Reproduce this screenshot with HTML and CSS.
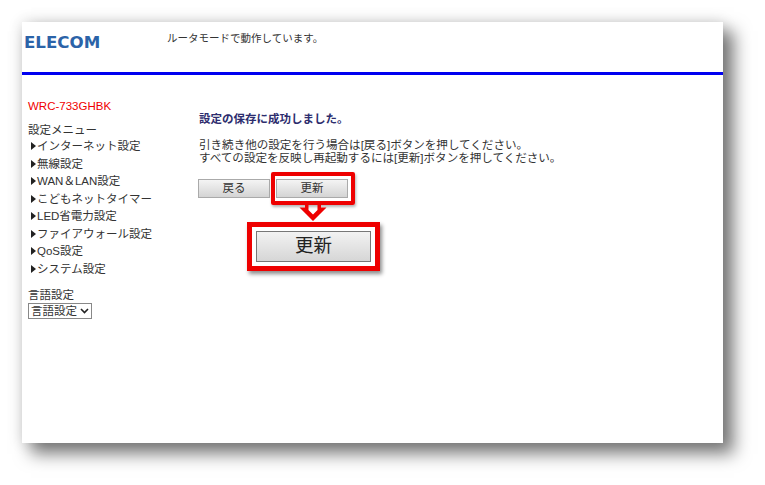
FILE: index.html
```html
<!DOCTYPE html>
<html lang="ja">
<head>
    <meta charset="UTF-8">
    <meta name="viewport" content="width=device-width, initial-scale=1.0">
    <title>WRC-733GHBK</title>
    <link rel="stylesheet" href="styles.css">
</head>
<body>
    <div class="panel">
        <div class="header">
            <div class="logo-box"><div class="logo">ELECOM</div></div>
            <div class="mode">ルータモードで動作しています。</div>
        </div>
        <div class="main">
            <div class="sidebar">
                <div class="model">WRC-733GHBK</div>
                <div class="menu-title">設定メニュー</div>
                <ul class="menu">
                    <li>インターネット設定</li>
                    <li>無線設定</li>
                    <li>WAN＆LAN設定</li>
                    <li>こどもネットタイマー</li>
                    <li>LED省電力設定</li>
                    <li>ファイアウォール設定</li>
                    <li>QoS設定</li>
                    <li>システム設定</li>
                </ul>
                <div class="lang-title">言語設定</div>
                <div class="lang-box">
                    <select class="lang">
                        <option>言語設定</option>
                    </select>
                    <svg class="lang-arrow" width="9" height="6" viewBox="0 0 9 6">
                        <path d="M1 1L4.500 4.500L8 1" fill="none" stroke="#222" stroke-width="1.600"/>
                    </svg>
                </div>
            </div>
            <div class="content">
                <div class="saved">設定の保存に成功しました。</div>
                <p class="note">引き続き他の設定を行う場合は[戻る]ボタンを押してください。<br>すべての設定を反映し再起動するには[更新]ボタンを押してください。</p>
                <div class="buttons">
                    <div class="btn">戻る</div>
                    <div class="btn">更新</div>
                </div>
            </div>
        </div>

        <!-- 説明用の赤枠 -->
        <div class="callout-small"></div>
        <svg class="callout-arrow" width="28" height="18" viewBox="0 0 28 18">
            <path d="M6 1H9.500V6L14 10.500L18.500 6V1H22V3.500H27.500L14 17L0.500 3.500H6Z" fill="#ee0000"/>
        </svg>
        <div class="callout-big">
            <div class="btn-big">更新</div>
        </div>
    </div>
</body>
</html>
```

FILE: styles.css
```css
body {
    margin: 0;
    padding: 22px 42px 42px 22px;
    background-color: white;
    font-family: "Liberation Sans", "Noto Sans CJK JP", sans-serif;
    color: #333;
    overflow: hidden;
}

.panel {
    position: relative;
    height: 421px;
    background-color: white;
    box-shadow: 10px 10px 16px 1px rgba(0, 0, 0, 0.5), 0 0 14px rgba(0, 0, 0, 0.14);
}

/* ヘッダー */
.header {
    display: flex;
    height: 50px;
    border-bottom: 3px solid #0000f0;
}

.logo-box {
    width: 145px;
    padding: 12px 0 0 2px;
    box-sizing: border-box;
}

.logo {
    font-family: "DejaVu Sans", sans-serif;
    font-size: 15px;
    font-weight: bold;
    line-height: 18px;
    color: #2b63a8;
    transform: scaleX(1.11);
    transform-origin: left;
}

.mode {
    padding-top: 9px;
    font-size: 10.5px;
    line-height: 14px;
}

.main {
    display: flex;
}

/* サイドメニュー */
.sidebar {
    width: 177px;
    padding: 24px 0 0 6px;
    font-size: 11.5px;
    line-height: 17.500px;
    box-sizing: border-box;
}

.model {
    color: #f00000;
    line-height: 14px;
    margin-bottom: 10px;
}

.menu-title {
    line-height: 15px;
}

.menu {
    list-style: none;
    margin: 0 0 10px;
    padding: 0 0 0 3px;
}

.menu li::before {
    content: "";
    display: inline-block;
    border-left: 5px solid #222;
    border-top: 4px solid transparent;
    border-bottom: 4px solid transparent;
    margin-right: 1px;
}

.lang-title {
    line-height: 14px;
}

.lang-box {
    position: relative;
    width: 64px;
    height: 16px;
    margin-top: 1px;
}

.lang {
    display: block;
    width: 100%;
    height: 100%;
    padding: 0 0 0 2px;
    font-family: inherit;
    font-size: 11.5px;
    color: #333;
    background-color: white;
    border: 1px solid #888;
    border-radius: 0;
    appearance: none;
}

.lang-arrow {
    position: absolute;
    right: 3px;
    top: 5px;
}

/* メイン */
.content {
    padding-top: 37px;
    font-size: 11.55px;
}

.saved {
    font-size: 11.5px;
    font-weight: bold;
    line-height: 14px;
    color: #2d2d6e;
}

.note {
    margin: 13px 0 0;
    line-height: 13px;
}

.buttons {
    display: flex;
    gap: 6px;
    margin-top: 14px;
    margin-left: -1px;
}

.btn {
    width: 72px;
    height: 19px;
    font-size: 11.5px;
    line-height: 17px;
    text-align: center;
    box-sizing: border-box;
    border: 1px solid #aaa;
    background: linear-gradient(#f4f4f4, #d4d4d4);
}

.callout-small {
    position: absolute;
    left: 249px;
    top: 150px;
    width: 84px;
    height: 33px;
    box-sizing: border-box;
    border: 4px solid #ee0000;
    border-radius: 2px;
    box-shadow: 1px 2px 3px rgba(0, 0, 0, 0.3);
}

.callout-arrow {
    position: absolute;
    left: 277px;
    top: 182px;
}

.callout-big {
    position: absolute;
    left: 225px;
    top: 200px;
    width: 133px;
    height: 49px;
    padding: 4px;
    box-sizing: border-box;
    background-color: white;
    border: 5px solid #ee0000;
    box-shadow: 2px 3px 4px rgba(0, 0, 0, 0.45);
}

.btn-big {
    height: 31px;
    font-size: 18.5px;
    line-height: 28px;
    color: #222;
    text-align: center;
    box-sizing: border-box;
    border: 1px solid #777;
    background: linear-gradient(#f2f2f2, #d6d6d6);
}
```
